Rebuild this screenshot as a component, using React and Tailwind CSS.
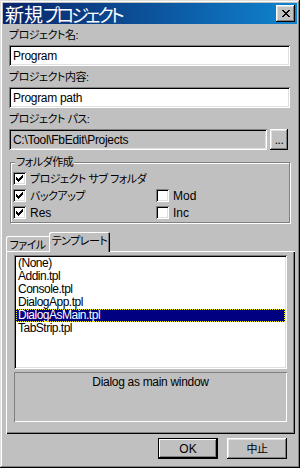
const sunken =
  "shadow-[inset_1px_1px_#808080,inset_-1px_-1px_#ffffff,inset_2px_2px_#000000,inset_-2px_-2px_#dfdfdf]";
const raised =
  "shadow-[inset_-1px_-1px_#000000,inset_1px_1px_#ffffff,inset_-2px_-2px_#808080,inset_2px_2px_#dfdfdf]";
const jp = "text-[11px] tracking-[-0.5px] whitespace-nowrap";

function Check({ checked }) {
  return (
    <div className={`w-[13px] h-[13px] bg-white shrink-0 relative ${sunken}`}>
      {checked && (
        <svg
          width="7"
          height="7"
          viewBox="0 0 7 7"
          className="absolute left-[3px] top-[3px]"
          shapeRendering="crispEdges"
        >
          <rect x="0" y="2" width="1" height="3" fill="#000" />
          <rect x="1" y="3" width="1" height="3" fill="#000" />
          <rect x="2" y="4" width="1" height="3" fill="#000" />
          <rect x="3" y="3" width="1" height="3" fill="#000" />
          <rect x="4" y="2" width="1" height="3" fill="#000" />
          <rect x="5" y="1" width="1" height="3" fill="#000" />
          <rect x="6" y="0" width="1" height="3" fill="#000" />
        </svg>
      )}
    </div>
  );
}

function CheckItem({ checked, label, latin }) {
  return (
    <div className="flex items-center h-[17px]">
      <Check checked={checked} />
      <span className={`ml-[4px] leading-[14px] ${latin ? "" : jp}`}>{label}</span>
    </div>
  );
}

function Label({ children }) {
  return (
    <div className="h-[21px] flex items-center leading-[14px]">
      <span className={jp}>{children}</span>
    </div>
  );
}

function TextBox({ value, gray, className = "" }) {
  return (
    <div
      className={`h-[21px] flex items-center px-[4px] ${gray ? "bg-[#c0c0c0]" : "bg-white"} ${sunken} ${className}`}
    >
      <span className="tracking-[-0.3px] leading-[14px]">{value}</span>
    </div>
  );
}

const items = ["(None)", "Addin.tpl", "Console.tpl", "DialogApp.tpl", "DialogAsMain.tpl", "TabStrip.tpl"];

export default function App() {
  return (
    <div className="w-[300px] h-[468px] bg-[#c0c0c0] p-[3px] flex flex-col shadow-[inset_-1px_-1px_#000000,inset_1px_1px_#dfdfdf,inset_-2px_-2px_#808080,inset_2px_2px_#ffffff] font-['Liberation_Sans','Noto_Sans_CJK_JP',sans-serif] [font-feature-settings:'palt'] text-[12px] text-black">
      {/* Title bar */}
      <div className="h-[21px] flex items-center justify-between bg-gradient-to-r from-[#0a246a] to-[#1084d0] pl-[2px] pr-[2px]">
        <span className="text-white text-[19px] leading-[21px] font-['Noto_Sans_CJK_JP',sans-serif] whitespace-nowrap">
          新規<span className="text-[18px] tracking-[-3px]">プロジェクト</span>
        </span>
        <div className={`w-[19px] h-[17px] bg-[#c0c0c0] flex items-center justify-center ${raised}`}>
          <svg width="8" height="7" viewBox="0 0 8 7" shapeRendering="crispEdges">
            <rect x="0" y="0" width="2" height="1" fill="#000" />
            <rect x="6" y="0" width="2" height="1" fill="#000" />
            <rect x="1" y="1" width="2" height="1" fill="#000" />
            <rect x="5" y="1" width="2" height="1" fill="#000" />
            <rect x="2" y="2" width="4" height="1" fill="#000" />
            <rect x="3" y="3" width="2" height="1" fill="#000" />
            <rect x="2" y="4" width="4" height="1" fill="#000" />
            <rect x="1" y="5" width="2" height="1" fill="#000" />
            <rect x="5" y="5" width="2" height="1" fill="#000" />
            <rect x="0" y="6" width="2" height="1" fill="#000" />
            <rect x="6" y="6" width="2" height="1" fill="#000" />
          </svg>
        </div>
      </div>

      {/* Fields */}
      <div className="pl-[6px] pr-[7px] flex flex-col">
        <Label>プロジェクト名:</Label>
        <TextBox value="Program" />
        <Label>プロジェクト内容:</Label>
        <TextBox value="Program path" />
        <Label>{"プロジェクト\u00a0パス:"}</Label>
        <div className="flex items-center">
          <TextBox value="C:\Tool\FbEdit\Projects" gray className="w-[258px]" />
          <div className={`ml-[3px] w-[18px] h-[21px] bg-[#c0c0c0] flex items-center justify-center ${raised}`}>
            <span className="leading-[14px] tracking-[-0.5px]">...</span>
          </div>
        </div>

        {/* Group box */}
        <div className="mt-[12px] ml-[1px] w-[280px] h-[61px] relative border border-[#808080] shadow-[1px_1px_0_#ffffff,inset_1px_1px_0_#ffffff] pt-[7px] pl-[2px]">
          <span className={`absolute left-[4px] top-[-8px] px-[1px] bg-[#c0c0c0] leading-[14px] ${jp}`}>フォルダ作成</span>
          <CheckItem checked label={"プロジェクト\u00a0サブ\u00a0フォルダ"} />
          <div className="grid grid-cols-[143px_1fr]">
            <CheckItem checked label="バックアップ" />
            <CheckItem latin label="Mod" />
            <CheckItem checked latin label="Res" />
            <CheckItem latin label="Inc" />
          </div>
        </div>
      </div>

      {/* Tabs */}
      <div className="mt-[9px] ml-[3px] h-[19px] flex items-end relative">
        <div className="w-[45px] h-[15px] flex items-center justify-center pr-[2px] rounded-t-[2px] shadow-[inset_1px_1px_#ffffff,inset_-1px_0_#000000,inset_-2px_0_#808080]">
          <span className={`leading-[14px] mt-[2px] ${jp}`}>ファイル</span>
        </div>
        <div className="-ml-[2px] w-[61px] h-[20px] -mb-[1px] z-10 bg-[#c0c0c0] flex items-center justify-center rounded-t-[2px] shadow-[inset_1px_1px_#ffffff,inset_-1px_0_#000000,inset_-2px_0_#808080]">
          <span className={`leading-[14px] -mt-[3px] ${jp}`}>テンプレート</span>
        </div>
      </div>

      {/* Tab panel */}
      <div className="ml-[3px] w-[289px] h-[183px] pt-[4px] px-[8px] flex flex-col shadow-[inset_1px_1px_#ffffff,inset_-1px_-1px_#000000,inset_-2px_-2px_#808080]">
        <div className={`h-[114px] bg-white p-[2px] flex flex-col ${sunken}`}>
          {items.map((it) => (
            <div
              key={it}
              className={`h-[13px] leading-[13px] px-[2px] tracking-[-0.5px] ${
                it === "DialogAsMain.tpl"
                  ? "bg-[#000080] text-white outline outline-1 outline-dotted outline-[#ffff00] -outline-offset-1"
                  : ""
              }`}
            >
              {it}
            </div>
          ))}
        </div>
        <div className="mt-[3px] h-[50px] pt-[1px] text-center shadow-[inset_1px_1px_#808080,inset_-1px_-1px_#ffffff]">
          <span className="leading-[14px] tracking-[-0.3px]">Dialog as main window</span>
        </div>
      </div>

      {/* Buttons */}
      <div className="mt-[4px] flex justify-end pr-[10px] gap-[9px]">
        <div className="w-[60px] h-[21px] border border-black flex items-center justify-center shadow-[inset_-1px_-1px_#000000,inset_1px_1px_#ffffff,inset_-2px_-2px_#808080]">
          <span className="leading-[14px]">OK</span>
        </div>
        <div className={`w-[60px] h-[21px] flex items-center justify-center ${raised}`}>
          <span className={`leading-[14px] ${jp}`}>中止</span>
        </div>
      </div>
    </div>
  );
}
